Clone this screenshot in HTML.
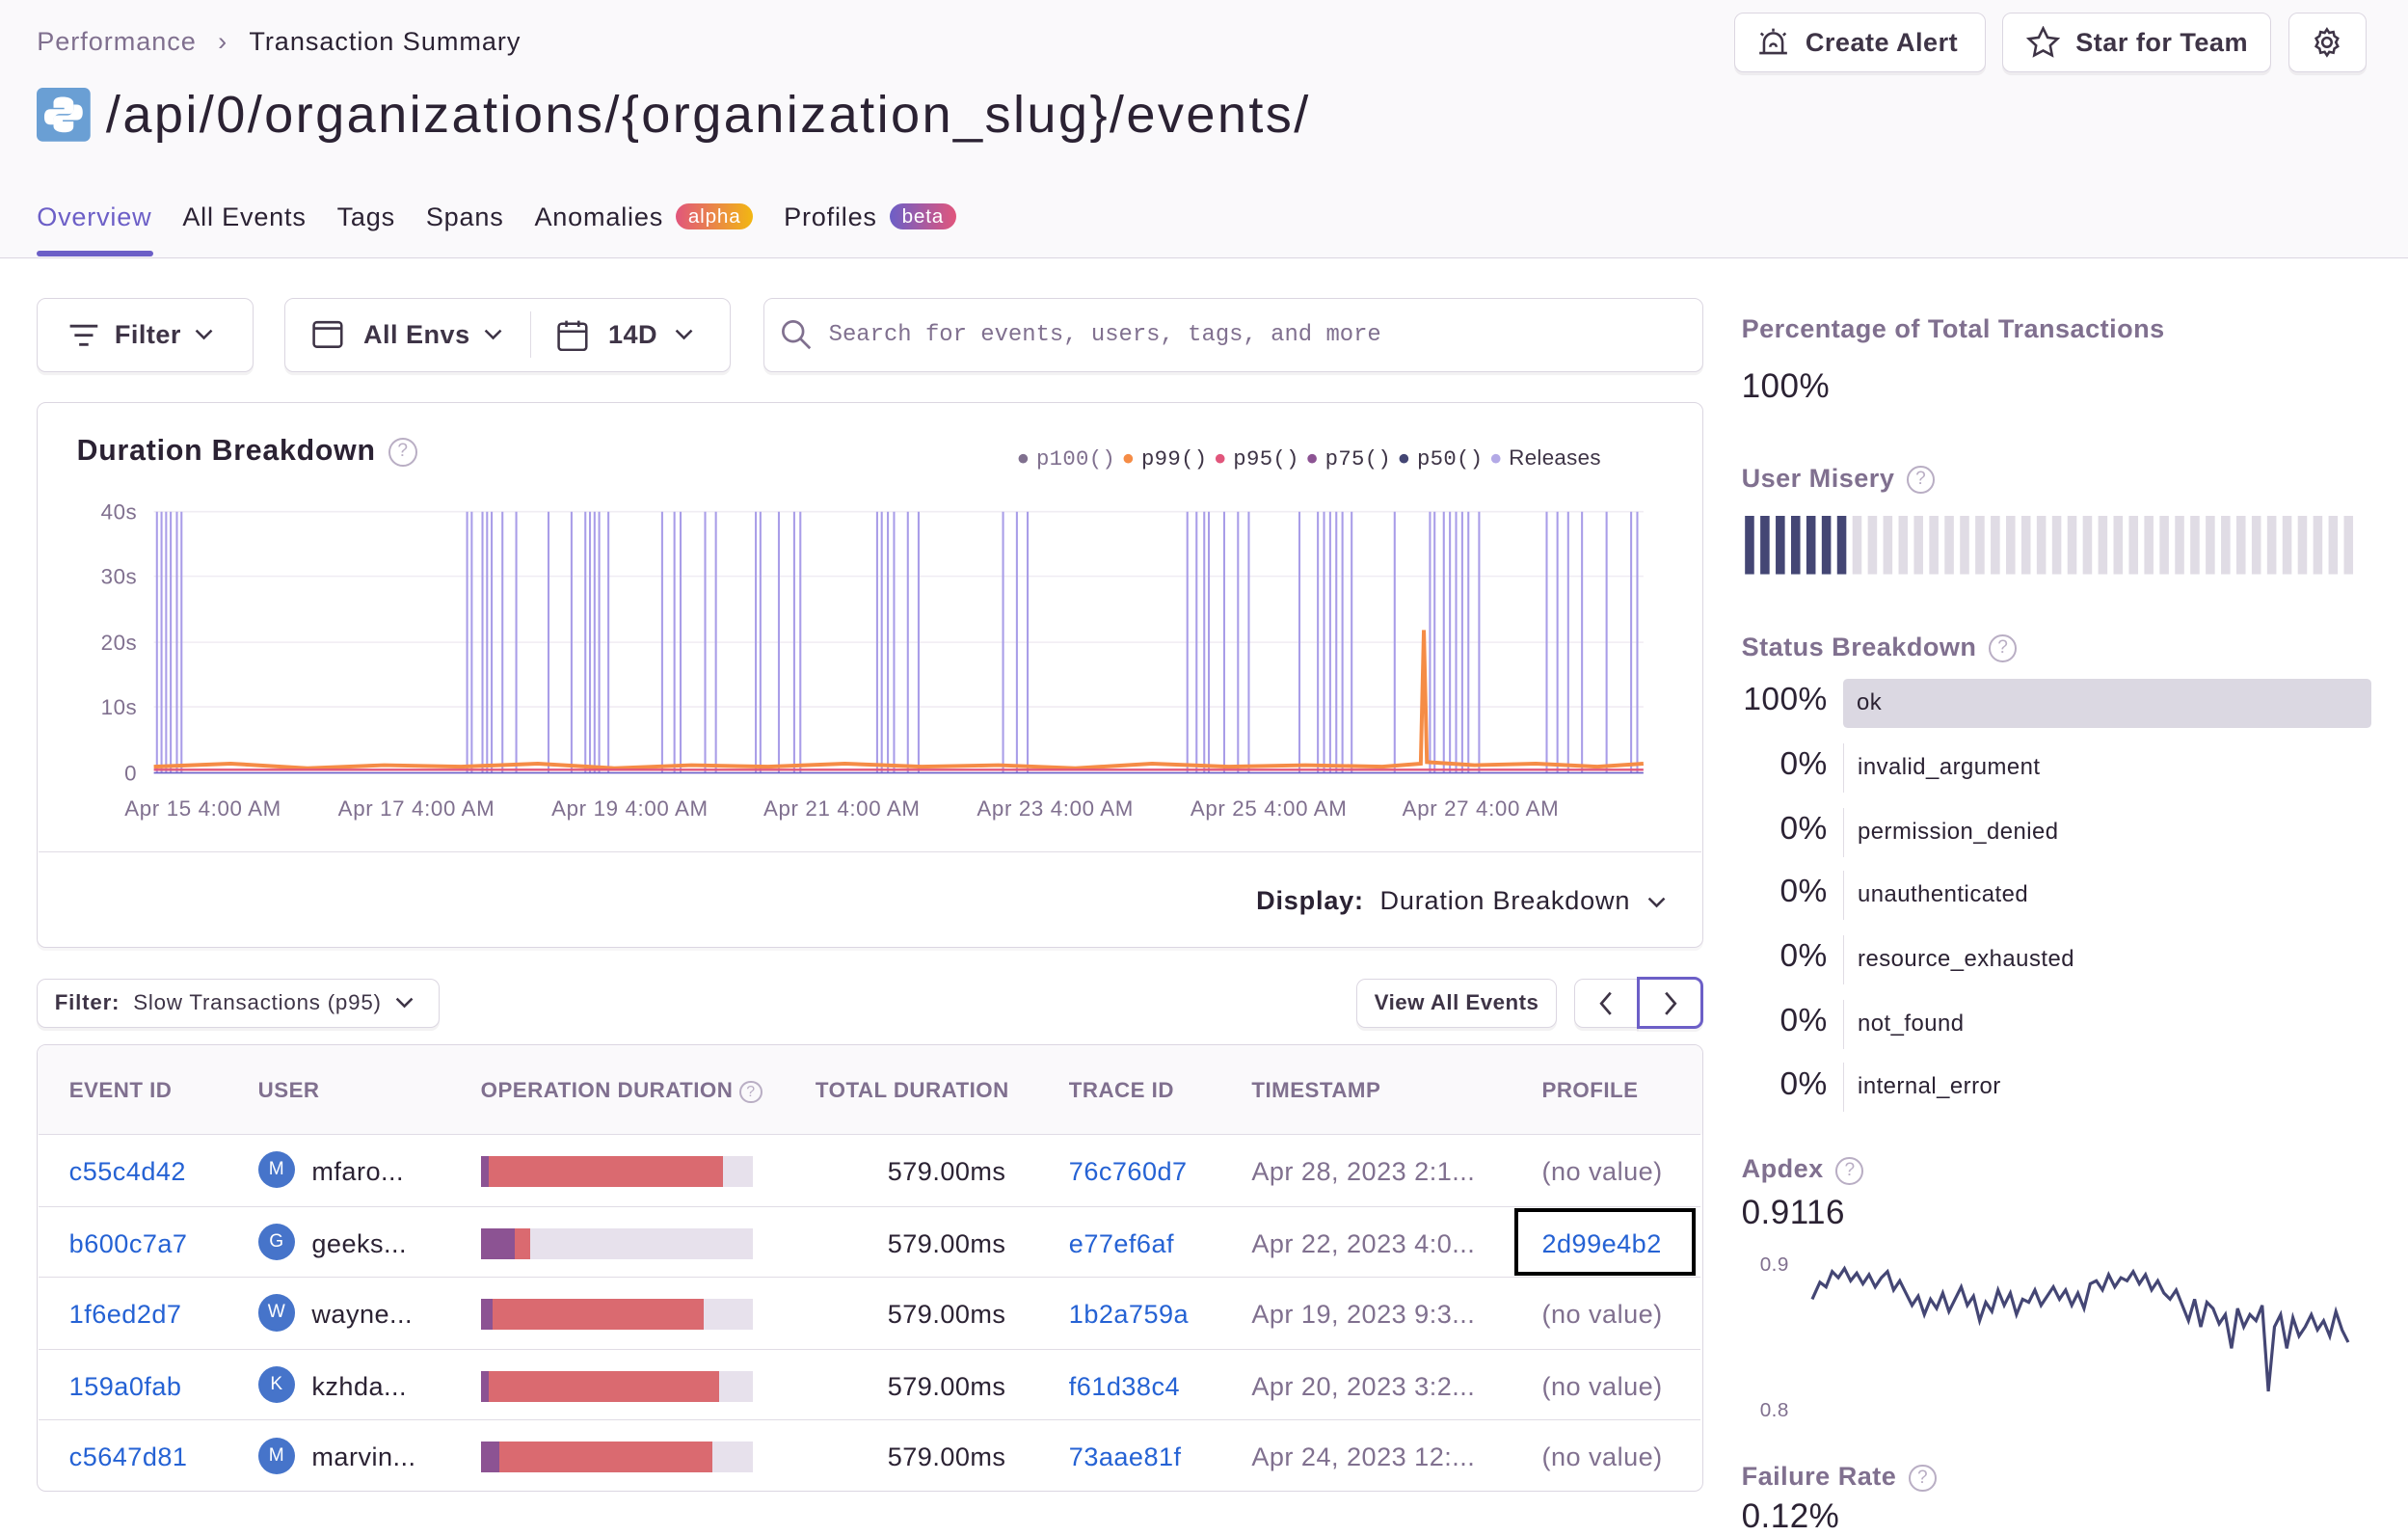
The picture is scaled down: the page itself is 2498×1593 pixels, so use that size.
<!DOCTYPE html>
<html><head><meta charset="utf-8"><style>
html{zoom:1.5931}
*{box-sizing:border-box;margin:0;padding:0}
body{width:1568px;height:985px;overflow:hidden;background:#fff;font-family:"Liberation Sans",sans-serif;color:#2b2233;position:relative;letter-spacing:0.3px}
.abs{position:absolute;white-space:nowrap}
.hdr{position:absolute;left:0;top:0;width:1568px;height:168px;background:#faf9fb;border-bottom:1px solid #dbd6e1}
.btn{position:absolute;border:1px solid #dbd6e1;border-radius:6px;background:#fff;box-shadow:0 2px 0 rgba(43,34,51,.06);display:flex;align-items:center;font-weight:bold;font-size:17px;color:#3e3446}
.muted{color:#80708f}
.link{color:#2562d4}
.th{position:absolute;top:702px;font-size:14px;font-weight:bold;color:#80708f}
.row{position:absolute;left:25px;width:1082px;height:46px;border-top:1px solid #e0dce5}
.cell{position:absolute;top:14px;font-size:17px;white-space:nowrap}
.av{position:absolute;left:143px;top:11px;width:24px;height:24px;border-radius:50%;background:#4674ca;color:#fff;font-size:12px;text-align:center;line-height:24px;letter-spacing:0}
.bar{position:absolute;left:288px;top:14px;width:177px;height:20px;background:#e7e1ec}
.sh{font-size:17px;font-weight:bold;color:#80708f}
.q{display:inline-block;width:18px;height:18px;border:1.5px solid #b9aec4;border-radius:50%;color:#b9aec4;font-size:12px;text-align:center;line-height:15px;font-weight:normal;vertical-align:middle;margin-left:8px;letter-spacing:0}
.st{position:absolute;left:1134px;width:410px;height:32px;font-size:15px}
.st .p{position:absolute;right:354px;top:2px;font-size:21px;color:#2b2233}
.st .l{position:absolute;left:66px;top:0;right:0;height:32px;line-height:32px;padding-left:9px;border-left:1px solid #e0dce5}
.tab{margin-left:20px}
</style></head><body>
<div class="hdr"></div>
<div class="abs" style="left:24px;top:17px;font-size:17px;letter-spacing:0.6px"><span class="muted">Performance</span><span class="muted" style="margin:0 14px">&#8250;</span>Transaction Summary</div>
<svg class="abs" style="left:24px;top:57px" width="35" height="35" viewBox="0 0 35 35"><rect width="35" height="35" rx="4" fill="#6a9fd4"/><path d="M17 6c-5 0-6 2-6 4v3h7v1H9c-3 0-4 2-4 5s1 5 4 5h2v-3c0-2 2-4 4-4h6c2 0 3-1 3-3v-4c0-2-2-4-7-4z" fill="#fff"/><path d="M18 29c5 0 6-2 6-4v-3h-7v-1h9c3 0 4-2 4-5s-1-5-4-5h-2v3c0 2-2 4-4 4h-6c-2 0-3 1-3 3v4c0 2 2 4 7 4z" fill="#fff"/></svg>
<div class="abs" style="left:69px;top:55px;font-size:34px;color:#2b2233;letter-spacing:1.5px">/api/0/organizations/{organization_slug}/events/</div>
<div class="abs" style="left:24px;top:131px;font-size:17px;color:#2b2233;letter-spacing:0.5px"><span style="color:#6c5fc7">Overview</span><span class="tab">All Events</span><span class="tab">Tags</span><span class="tab">Spans</span><span class="tab">Anomalies</span> <span style="display:inline-block;background:linear-gradient(90deg,#e1567c,#f2b712);color:#fff;font-size:13px;border-radius:10px;padding:1px 8px;vertical-align:2px;margin-left:3px">alpha</span><span class="tab">Profiles</span> <span style="display:inline-block;background:linear-gradient(90deg,#6c5fc7,#e1567c);color:#fff;font-size:13px;border-radius:10px;padding:1px 8px;vertical-align:2px;margin-left:3px">beta</span></div>
<div class="abs" style="left:24px;top:163px;width:76px;height:4px;background:#6c5fc7;border-radius:2px"></div>

<div class="btn" style="left:1129px;top:8px;width:164px;height:39px;padding-left:14px"><svg width="22" height="20" viewBox="0 0 22 20" fill="none" stroke="#3e3446" stroke-width="1.6"><path d="M5 17V10a6 6 0 0112 0v7M2 17h18M11 1v2M3 4l1.5 1.5M19 4l-1.5 1.5M9 13a2 2 0 014 0"/></svg><span style="margin-left:10px">Create Alert</span></div>
<div class="btn" style="left:1304px;top:8px;width:175px;height:39px;padding-left:15px"><svg width="22" height="21" viewBox="0 0 22 21" fill="none" stroke="#3e3446" stroke-width="1.6"><path d="M11 1.5l2.9 6 6.4.8-4.7 4.4 1.2 6.4L11 16l-5.8 3.1 1.2-6.4L1.7 8.3l6.4-.8z"/></svg><span style="margin-left:10px">Star for Team</span></div>
<div class="btn" style="left:1490px;top:8px;width:51px;height:39px;justify-content:center"><svg width="20" height="20" viewBox="0 0 20 20" fill="none" stroke="#3e3446" stroke-width="1.6"><circle cx="10" cy="10" r="3"/><path d="M10 1.5l1.5 2.3 2.7-.6.6 2.7 2.3 1.5-1.3 2.6 1.3 2.6-2.3 1.5-.6 2.7-2.7-.6L10 18.5l-1.5-2.3-2.7.6-.6-2.7-2.3-1.5L4.2 10 2.9 7.4l2.3-1.5.6-2.7 2.7.6z"/></svg></div>

<div class="btn" style="left:24px;top:194px;width:141px;height:48px;padding-left:20px"><svg width="20" height="16" viewBox="0 0 20 16" stroke="#3e3446" stroke-width="1.8"><path d="M1 2h18M4 8h12M7 14h6"/></svg><span style="margin-left:10px">Filter</span><svg style="margin-left:9px" width="12" height="8" viewBox="0 0 12 8" fill="none" stroke="#3e3446" stroke-width="1.6"><path d="M1 1l5 5 5-5"/></svg></div>
<div class="btn" style="left:185px;top:194px;width:291px;height:48px;padding-left:18px"><svg width="20" height="20" viewBox="0 0 20 20" fill="none" stroke="#3e3446" stroke-width="1.6"><rect x="1" y="2" width="18" height="16" rx="2"/><path d="M1 6h18"/></svg><span style="margin-left:13px">All Envs</span><svg style="margin-left:9px" width="12" height="8" viewBox="0 0 12 8" fill="none" stroke="#3e3446" stroke-width="1.6"><path d="M1 1l5 5 5-5"/></svg><span style="width:1px;height:30px;background:#e0dce5;margin-left:18px"></span><svg style="margin-left:17px" width="20" height="21" viewBox="0 0 20 21" fill="none" stroke="#3e3446" stroke-width="1.6"><rect x="1" y="3" width="18" height="17" rx="2"/><path d="M1 8h18M6 1v4M14 1v4"/></svg><span style="margin-left:13px">14D</span><svg style="margin-left:11px" width="12" height="8" viewBox="0 0 12 8" fill="none" stroke="#3e3446" stroke-width="1.6"><path d="M1 1l5 5 5-5"/></svg></div>
<div class="btn" style="left:497px;top:194px;width:612px;height:48px;padding-left:11px;font-weight:normal"><svg width="20" height="20" viewBox="0 0 20 20" fill="none" stroke="#80708f" stroke-width="1.7"><circle cx="8" cy="8" r="6.5"/><path d="M13 13l6 6"/></svg><span style="margin-left:11px;font-family:'Liberation Mono',monospace;font-size:15px;color:#80708f;letter-spacing:0">Search for events, users, tags, and more</span></div>

<div class="abs" style="left:24px;top:262px;width:1085px;height:355px;border:1px solid #dbd6e1;border-radius:6px;box-shadow:0 2px 0 rgba(43,34,51,.04)"></div>
<div class="abs" style="left:50px;top:283px;font-size:19px;font-weight:bold;letter-spacing:0.5px">Duration Breakdown<span class="q" style="width:19px;height:19px">?</span></div>
<div class="abs" style="left:662px;top:290px;font-size:14px;color:#3e3446;letter-spacing:0.2px"><span style="color:#80708f">●</span> <span style="font-family:'Liberation Mono',monospace;color:#80708f">p100()</span> <span style="color:#f58c46">●</span> <span style="font-family:'Liberation Mono',monospace">p99()</span> <span style="color:#e1567c">●</span> <span style="font-family:'Liberation Mono',monospace">p95()</span> <span style="color:#8c5393">●</span> <span style="font-family:'Liberation Mono',monospace">p75()</span> <span style="color:#444674">●</span> <span style="font-family:'Liberation Mono',monospace">p50()</span> <span style="color:#b3a9e6">●</span> Releases</div>
<svg class="abs" style="left:40px;top:320px" width="1060" height="225" viewBox="40 320 1060 225">
<g font-family="Liberation Sans" font-size="14" fill="#80708f" text-anchor="end"><text x="89" y="338">40s</text><text x="89" y="380">30s</text><text x="89" y="423">20s</text><text x="89" y="465">10s</text><text x="89" y="508">0</text></g>
<g stroke="#f0ecf3"><path d="M100 333H1070M100 375H1070M100 418H1070M100 460H1070"/></g>
<g stroke="#a99de8" stroke-width="1.3"><path d="M102 333V503M105 333V503M108 333V503M111 333V503M115 333V503M118 333V503M304 333V503M307 333V503M314 333V503M317 333V503M320 333V503M327 333V503M336 333V503M357 333V503M372 333V503M381 333V503M384 333V503M387 333V503M390 333V503M396 333V503M431 333V503M439 333V503M443 333V503M459 333V503M466 333V503M492 333V503M495 333V503M507 333V503M517 333V503M521 333V503M571 333V503M574 333V503M578 333V503M582 333V503M591 333V503M598 333V503M653 333V503M662 333V503M669 333V503M773 333V503M779 333V503M784 333V503M787 333V503M797 333V503M806 333V503M813 333V503M846 333V503M858 333V503M862 333V503M866 333V503M870 333V503M874 333V503M880 333V503M908 333V503M931 333V503M934 333V503M940 333V503M944 333V503M948 333V503M952 333V503M956 333V503M963 333V503M1007 333V503M1014 333V503M1021 333V503M1030 333V503M1046 333V503M1062 333V503M1066 333V503"/></g>
<path d="M100 503H1070" stroke="#6c5fc7" stroke-width="1"/>
<path d="M100 499 L150 497 L200 500 L250 498 L300 499 L350 497 L400 500 L450 498 L500 499 L550 497 L600 499 L650 498 L700 500 L750 497 L800 499 L850 498 L900 499 L925 497 L927 410 L929 496 L960 498 L1000 497 L1040 499 L1070 497" stroke="#f58c46" stroke-width="2.5" fill="none"/>
<path d="M100 501H1070" stroke="#e1567c" stroke-width="1.5"/>
<g font-family="Liberation Sans" font-size="14" fill="#80708f" text-anchor="middle" letter-spacing="0.4"><text x="132" y="531">Apr 15 4:00 AM</text><text x="271" y="531">Apr 17 4:00 AM</text><text x="410" y="531">Apr 19 4:00 AM</text><text x="548" y="531">Apr 21 4:00 AM</text><text x="687" y="531">Apr 23 4:00 AM</text><text x="826" y="531">Apr 25 4:00 AM</text><text x="964" y="531">Apr 27 4:00 AM</text></g>
</svg>
<div class="abs" style="left:25px;top:554px;width:1083px;height:1px;background:#e0dce5"></div>
<div class="abs" style="left:818px;top:576px;font-size:17px;letter-spacing:0.5px"><b>Display:</b>&nbsp; Duration Breakdown <svg style="margin-left:6px" width="12" height="8" viewBox="0 0 12 8" fill="none" stroke="#3e3446" stroke-width="1.6"><path d="M1 1l5 5 5-5"/></svg></div>

<div class="btn" style="left:24px;top:637px;width:262px;height:32px;padding-left:11px;font-size:14px;font-weight:normal;letter-spacing:0.5px"><b>Filter:</b>&nbsp; Slow Transactions (p95)<svg style="margin-left:9px" width="12" height="8" viewBox="0 0 12 8" fill="none" stroke="#3e3446" stroke-width="1.6"><path d="M1 1l5 5 5-5"/></svg></div>
<div class="btn" style="left:883px;top:637px;width:131px;height:32px;justify-content:center;font-size:14px">View All Events</div>
<div class="btn" style="left:1025px;top:637px;width:42px;height:32px;justify-content:center;border-radius:6px 0 0 6px"><svg width="10" height="16" viewBox="0 0 10 16" fill="none" stroke="#3e3446" stroke-width="1.7"><path d="M8 1L2 8l6 7"/></svg></div>
<div class="btn" style="left:1066px;top:636px;width:43px;height:34px;justify-content:center;border:2px solid #6c5fc7;border-radius:0 6px 6px 0"><svg width="10" height="16" viewBox="0 0 10 16" fill="none" stroke="#3e3446" stroke-width="1.7"><path d="M2 1l6 7-6 7"/></svg></div>

<div class="abs" style="left:24px;top:680px;width:1085px;height:291px;border:1px solid #dbd6e1;border-radius:6px;overflow:hidden"><div style="height:58px;background:#faf9fb"></div></div>
<div class="th" style="left:45px">EVENT ID</div><div class="th" style="left:168px">USER</div><div class="th" style="left:313px">OPERATION DURATION<span class="q" style="width:15px;height:15px;font-size:10px;line-height:12px;margin-left:4px">?</span></div><div class="th" style="left:531px">TOTAL DURATION</div><div class="th" style="left:696px">TRACE ID</div><div class="th" style="left:815px">TIMESTAMP</div><div class="th" style="left:1004px">PROFILE</div>

<div class="row" style="top:738px"><span class="cell link" style="left:20px">c55c4d42</span><div class="av">M</div><span class="cell" style="left:178px">mfaro...</span><div class="bar"><div style="position:absolute;left:0;width:5px;height:20px;background:#8c5393"></div><div style="position:absolute;left:5px;width:153px;height:20px;background:#da6a70"></div></div><span class="cell" style="right:452px">579.00ms</span><span class="cell link" style="left:671px">76c760d7</span><span class="cell muted" style="left:790px">Apr 28, 2023 2:1...</span><span class="cell muted" style="left:979px">(no value)</span></div>
<div class="row" style="top:785px"><span class="cell link" style="left:20px">b600c7a7</span><div class="av">G</div><span class="cell" style="left:178px">geeks...</span><div class="bar"><div style="position:absolute;left:0;width:22px;height:20px;background:#8c5393"></div><div style="position:absolute;left:22px;width:10px;height:20px;background:#da6a70"></div></div><span class="cell" style="right:452px">579.00ms</span><span class="cell link" style="left:671px">e77ef6af</span><span class="cell muted" style="left:790px">Apr 22, 2023 4:0...</span><div style="position:absolute;left:961px;top:1px;width:118px;height:44px;border:3px solid #000"></div><span class="cell link" style="left:979px">2d99e4b2</span></div>
<div class="row" style="top:831px"><span class="cell link" style="left:20px">1f6ed2d7</span><div class="av">W</div><span class="cell" style="left:178px">wayne...</span><div class="bar"><div style="position:absolute;left:0;width:8px;height:20px;background:#8c5393"></div><div style="position:absolute;left:8px;width:137px;height:20px;background:#da6a70"></div></div><span class="cell" style="right:452px">579.00ms</span><span class="cell link" style="left:671px">1b2a759a</span><span class="cell muted" style="left:790px">Apr 19, 2023 9:3...</span><span class="cell muted" style="left:979px">(no value)</span></div>
<div class="row" style="top:878px"><span class="cell link" style="left:20px">159a0fab</span><div class="av">K</div><span class="cell" style="left:178px">kzhda...</span><div class="bar"><div style="position:absolute;left:0;width:5px;height:20px;background:#8c5393"></div><div style="position:absolute;left:5px;width:150px;height:20px;background:#da6a70"></div></div><span class="cell" style="right:452px">579.00ms</span><span class="cell link" style="left:671px">f61d38c4</span><span class="cell muted" style="left:790px">Apr 20, 2023 3:2...</span><span class="cell muted" style="left:979px">(no value)</span></div>
<div class="row" style="top:924px"><span class="cell link" style="left:20px">c5647d81</span><div class="av">M</div><span class="cell" style="left:178px">marvin...</span><div class="bar"><div style="position:absolute;left:0;width:12px;height:20px;background:#8c5393"></div><div style="position:absolute;left:12px;width:139px;height:20px;background:#da6a70"></div></div><span class="cell" style="right:452px">579.00ms</span><span class="cell link" style="left:671px">73aae81f</span><span class="cell muted" style="left:790px">Apr 24, 2023 12:...</span><span class="cell muted" style="left:979px">(no value)</span></div>

<div class="abs sh" style="left:1134px;top:204px">Percentage of Total Transactions</div>
<div class="abs" style="left:1134px;top:239px;font-size:22px">100%</div>
<div class="abs sh" style="left:1134px;top:301px">User Misery<span class="q">?</span></div>
<svg class="abs" style="left:1134px;top:336px" width="400" height="38"><g fill="#444674">
<rect x="2" width="6" height="38"/><rect x="12" width="6" height="38"/><rect x="22" width="6" height="38"/><rect x="32" width="6" height="38"/><rect x="42" width="6" height="38"/><rect x="52" width="6" height="38"/><rect x="62" width="6" height="38"/>
</g><g fill="#e0dce5"><rect x="72" width="6" height="38"/><rect x="82" width="6" height="38"/><rect x="92" width="6" height="38"/><rect x="102" width="6" height="38"/><rect x="112" width="6" height="38"/><rect x="122" width="6" height="38"/><rect x="132" width="6" height="38"/><rect x="142" width="6" height="38"/><rect x="152" width="6" height="38"/><rect x="162" width="6" height="38"/><rect x="172" width="6" height="38"/><rect x="182" width="6" height="38"/><rect x="192" width="6" height="38"/><rect x="202" width="6" height="38"/><rect x="212" width="6" height="38"/><rect x="222" width="6" height="38"/><rect x="232" width="6" height="38"/><rect x="242" width="6" height="38"/><rect x="252" width="6" height="38"/><rect x="262" width="6" height="38"/><rect x="272" width="6" height="38"/><rect x="282" width="6" height="38"/><rect x="292" width="6" height="38"/><rect x="302" width="6" height="38"/><rect x="312" width="6" height="38"/><rect x="322" width="6" height="38"/><rect x="332" width="6" height="38"/><rect x="342" width="6" height="38"/><rect x="352" width="6" height="38"/><rect x="362" width="6" height="38"/><rect x="372" width="6" height="38"/><rect x="382" width="6" height="38"/><rect x="392" width="6" height="38"/></g></svg>
<div class="abs sh" style="left:1134px;top:411px">Status Breakdown<span class="q">?</span></div>
<div class="st" style="top:442px"><span class="p">100%</span><div class="l" style="background:#dbd8e2;border-radius:3px;border:none">ok</div></div>
<div class="st" style="top:484px"><span class="p">0%</span><div class="l">invalid_argument</div></div>
<div class="st" style="top:526px"><span class="p">0%</span><div class="l">permission_denied</div></div>
<div class="st" style="top:567px"><span class="p">0%</span><div class="l">unauthenticated</div></div>
<div class="st" style="top:609px"><span class="p">0%</span><div class="l">resource_exhausted</div></div>
<div class="st" style="top:651px"><span class="p">0%</span><div class="l">not_found</div></div>
<div class="st" style="top:692px"><span class="p">0%</span><div class="l">internal_error</div></div>
<div class="abs sh" style="left:1134px;top:751px">Apdex<span class="q">?</span></div>
<div class="abs" style="left:1134px;top:777px;font-size:22px">0.9116</div>
<div class="abs" style="left:1146px;top:816px;font-size:13px;color:#80708f">0.9</div>
<div class="abs" style="left:1146px;top:911px;font-size:13px;color:#80708f">0.8</div>
<svg class="abs" style="left:1175px;top:820px" width="360" height="92"><polyline fill="none" stroke="#444674" stroke-width="2" points="5,26 10,15 14,18 18,8 22,12 26,6 30,14 34,9 38,16 42,10 46,18 50,12 54,8 58,20 62,14 66,22 70,30 74,24 78,36 82,26 86,32 90,22 94,34 98,26 102,18 106,30 110,24 114,40 118,28 122,34 126,20 130,30 134,22 138,36 142,26 146,28 150,20 154,30 158,24 162,18 166,26 170,20 174,30 178,22 182,32 186,16 190,14 194,20 198,10 202,18 206,12 210,14 214,8 218,16 222,10 226,20 230,14 234,22 238,26 242,20 246,30 250,40 254,26 258,44 262,28 266,32 270,42 274,36 278,58 282,32 286,44 290,36 294,40 298,30 302,86 306,44 310,36 314,58 318,38 322,50 326,44 330,36 334,46 338,40 342,50 346,34 350,46 354,54"/></svg>
<div class="abs sh" style="left:1134px;top:951px">Failure Rate<span class="q">?</span></div>
<div class="abs" style="left:1134px;top:975px;font-size:22px">0.12%</div>
</body></html>
